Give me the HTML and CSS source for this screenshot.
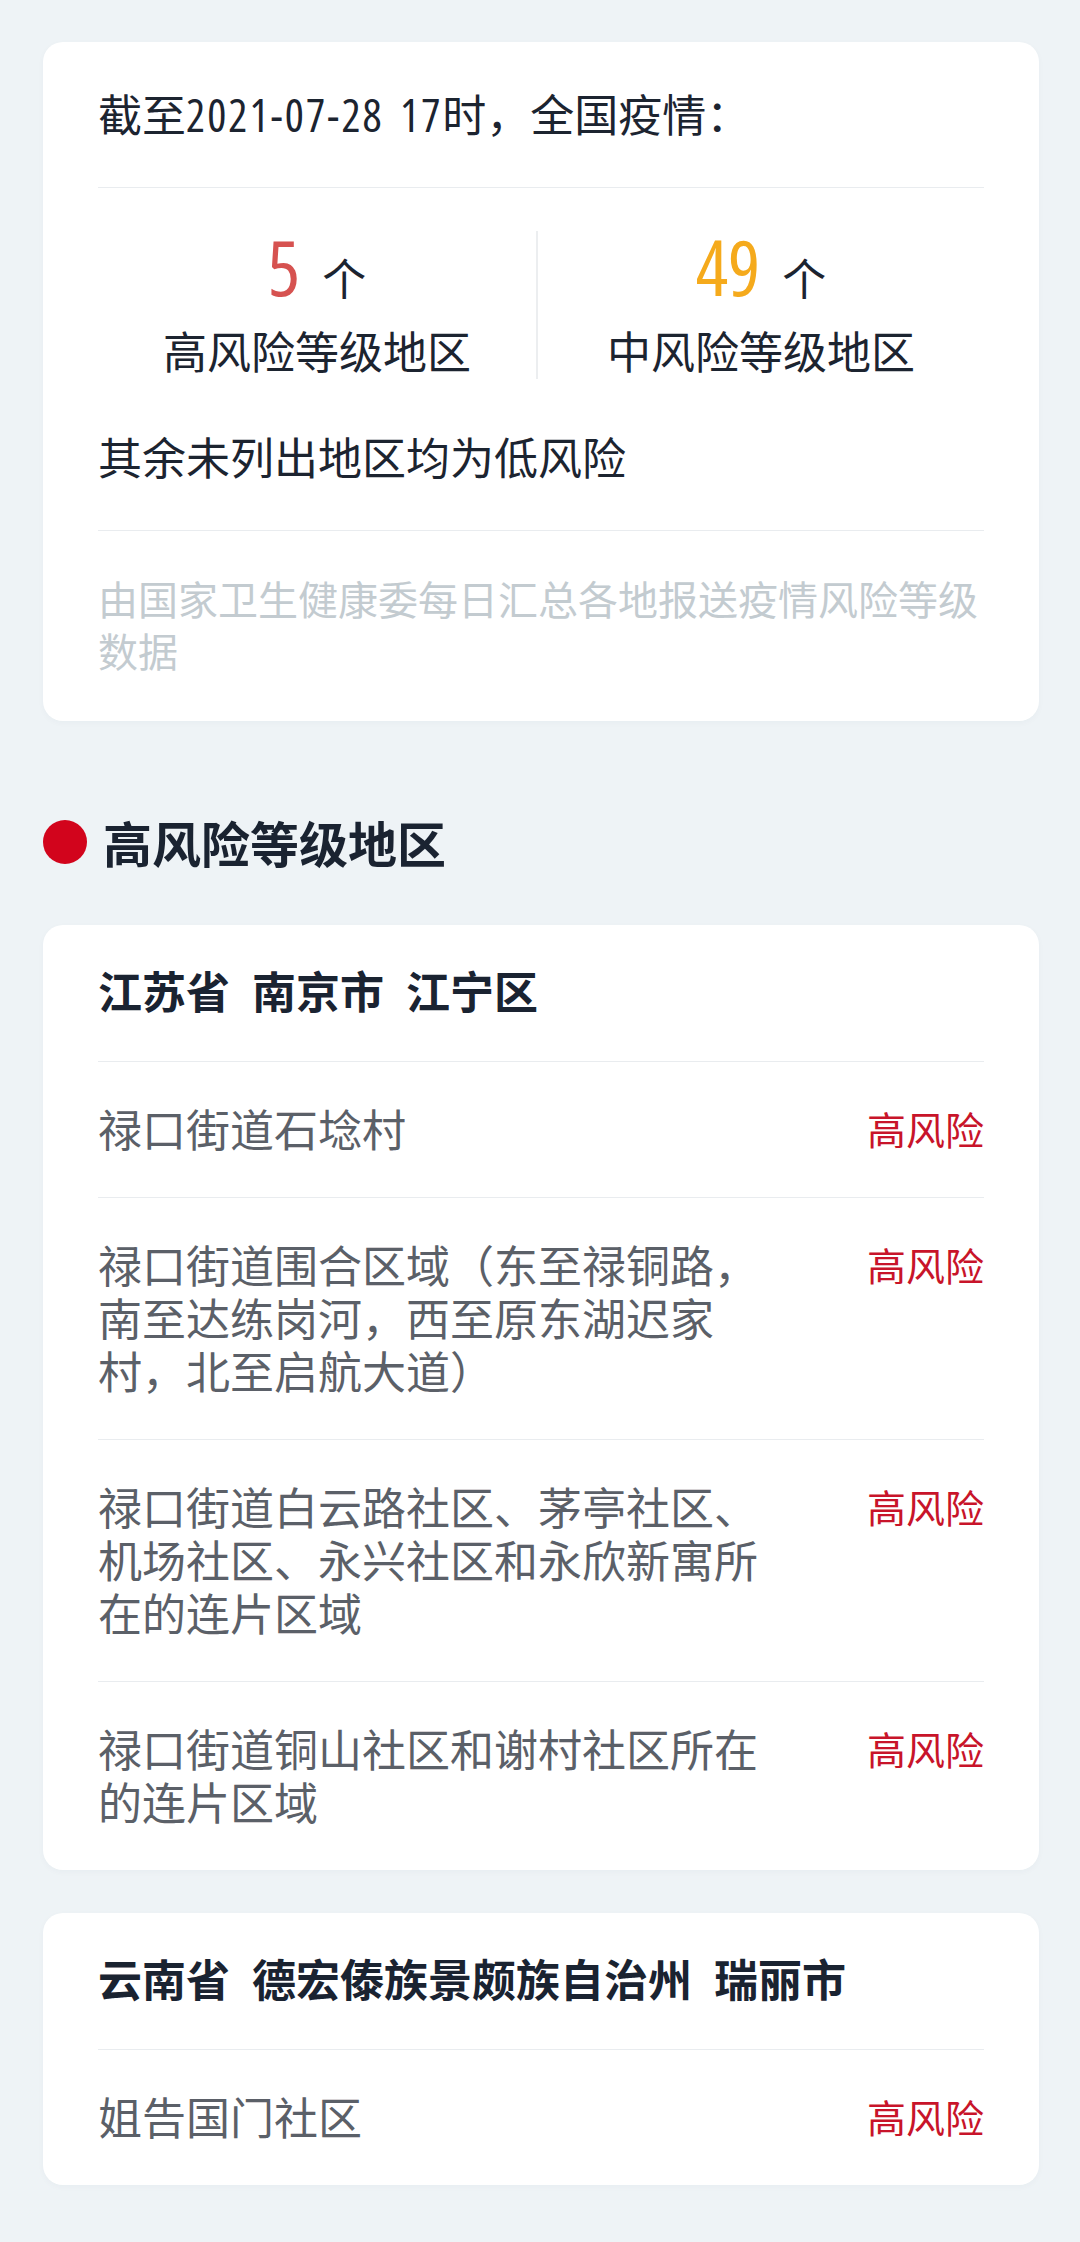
FILE: index.html
```html
<!DOCTYPE html>
<html lang="zh-CN">
<head>
    <meta charset="utf-8"/>
    <title>疫情风险等级</title>
    <link rel="stylesheet" href="styles.css">
</head>
<body>
<div class="page">
    <div class="card summary">
        <p class="summary-title">截至<span class="digits">2021-07-28 17</span>时，全国疫情：</p>
        <div class="stats">
            <div class="stat">
                <p class="stat-count"><span class="num num-high">5</span>个</p>
                <p class="stat-label">高风险等级地区</p>
            </div>
            <div class="stat stat-mid">
                <p class="stat-count"><span class="num num-mid">49</span>个</p>
                <p class="stat-label">中风险等级地区</p>
            </div>
        </div>
        <p class="summary-low">其余未列出地区均为低风险</p>
        <p class="summary-note">由国家卫生健康委每日汇总各地报送疫情风险等级数据</p>
    </div>

    <h2 class="section-title"><span class="dot"></span>高风险等级地区</h2>

    <div class="card area">
        <div class="area-head"><span>江苏省</span><span>南京市</span><span>江宁区</span></div>
        <div class="row">
            <span class="row-name">禄口街道石埝村</span>
            <span class="row-level">高风险</span>
        </div>
        <div class="row">
            <span class="row-name">禄口街道围合区域（东至禄铜路，南至达练岗河，西至原东湖迟家村，北至启航大道）</span>
            <span class="row-level">高风险</span>
        </div>
        <div class="row">
            <span class="row-name">禄口街道白云路社区、茅亭社区、机场社区、永兴社区和永欣新寓所在的连片区域</span>
            <span class="row-level">高风险</span>
        </div>
        <div class="row">
            <span class="row-name">禄口街道铜山社区和谢村社区所在的连片区域</span>
            <span class="row-level">高风险</span>
        </div>
    </div>

    <div class="card area">
        <div class="area-head"><span>云南省</span><span>德宏傣族景颇族自治州</span><span>瑞丽市</span></div>
        <div class="row">
            <span class="row-name">姐告国门社区</span>
            <span class="row-level">高风险</span>
        </div>
    </div>
</div>
</body>
</html>
```

FILE: styles.css
```css
*{
    padding: 0;
    margin: 0;
    box-sizing: border-box;
}

body{
    background-color: #eef3f6;
    font-family: "Noto Sans CJK SC", "Noto Sans", sans-serif;
    color: #1c2430;
}

.page{
    padding: 42px 41px 58px 43px;
}

.card{
    background-color: #fff;
    border-radius: 20px;
    padding: 0 55px;
    box-shadow: 0 2px 6px rgba(40, 60, 80, 0.03);
}

/* 汇总卡片 */
.summary{
    padding-top: 45px;
    padding-bottom: 45px;
}

.summary-title{
    font-size: 44px;
    line-height: 52px;
    padding-bottom: 48px;
    border-bottom: 1px solid #e9ecef;
}

.digits{
    font-family: "Open Sans", "Roboto", sans-serif;
    font-stretch: condensed;
    font-size: 45px;
    letter-spacing: 2px;
    word-spacing: 6px;
    line-height: 40px;
}

.stats{
    display: grid;
    grid-template-columns: 438px 1fr;
    margin-top: 43px;
}

.stat{
    text-align: center;
    padding: 6px 0 3px;
}

.stat-mid{
    border-left: 2px solid #eceef0;
}

.stat-count{
    font-size: 44px;
    line-height: 78px;
}

.num{
    font-family: "Open Sans", "Roboto", sans-serif;
    font-stretch: condensed;
    font-size: 76px;
    line-height: 60px;
    margin-right: 22px;
}

.num-high{
    color: #d65250;
}

.num-mid{
    color: #f5aa1c;
}

.stat-label{
    font-size: 44px;
    line-height: 52px;
    margin-top: 8px;
}

.summary-low{
    font-size: 44px;
    line-height: 52px;
    margin-top: 51px;
    padding-bottom: 48px;
    border-bottom: 1px solid #e9ecef;
}

.summary-note{
    font-size: 40px;
    line-height: 52px;
    margin-top: 41px;
    color: #c3cbd0;
}

/* 分组标题 */
.section-title{
    display: flex;
    align-items: center;
    font-size: 49px;
    line-height: 60px;
    font-weight: 700;
    margin: 91px 0 53px;
    color: #1a2331;
}

.section-title .dot{
    width: 44px;
    height: 44px;
    border-radius: 50%;
    background-color: #d2041c;
    margin-right: 16px;
}

/* 地区列表 */
.area + .area{
    margin-top: 43px;
}

.area-head{
    display: flex;
    gap: 22px;
    font-size: 44px;
    line-height: 52px;
    font-weight: 700;
    padding: 39px 0 45px;
    color: #1a2331;
}

.row{
    display: flex;
    justify-content: space-between;
    align-items: flex-start;
    border-top: 1px solid #e9ecef;
    padding: 40px 0 42px;
    font-size: 44px;
    line-height: 53px;
}

.row-name{
    width: 680px;
    color: #5b6068;
}

.row-level{
    font-size: 39px;
    color: #c8142a;
}
```
